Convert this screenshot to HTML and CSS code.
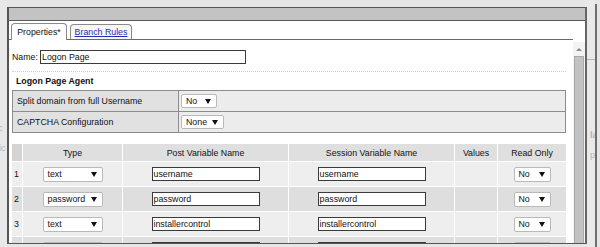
FILE: index.html
```html
<!DOCTYPE html>
<html>
<head>
<meta charset="utf-8">
<link rel="stylesheet" href="styles.css">
</head>
<body>
<div class="desk">
  <div class="lstrip">
    <span class="ghost g1">c</span>
    <span class="ghost g2">ic</span>
  </div>
  <div class="dialog">
    <div class="titlebar"></div>
    <div class="content">
      <div class="main">
        <div class="tabs">
          <div class="tab active">Properties*</div>
          <div class="tab link"><a>Branch Rules</a></div>
        </div>
        <div class="panel">
          <div class="namerow">
            <span class="lbl">Name:</span>
            <span class="input name">Logon Page</span>
          </div>
          <div class="sep"></div>
          <div class="section">Logon Page Agent</div>
          <div class="props">
            <div class="prow">
              <div class="pl">Split domain from full Username</div>
              <div class="pv"><span class="sel s-no">No</span></div>
            </div>
            <div class="prow">
              <div class="pl">CAPTCHA Configuration</div>
              <div class="pv"><span class="sel s-none">None</span></div>
            </div>
          </div>
          <div class="vars">
            <div class="vrow head">
              <div class="c idx"></div>
              <div class="c">Type</div>
              <div class="c">Post Variable Name</div>
              <div class="c">Session Variable Name</div>
              <div class="c">Values</div>
              <div class="c">Read Only</div>
            </div>
            <div class="vrow odd">
              <div class="c idx">1</div>
              <div class="c"><span class="sel s-type">text</span></div>
              <div class="c"><span class="input v">username</span></div>
              <div class="c"><span class="input v">username</span></div>
              <div class="c"></div>
              <div class="c"><span class="sel s-ro">No</span></div>
            </div>
            <div class="vrow even">
              <div class="c idx">2</div>
              <div class="c"><span class="sel s-type">password</span></div>
              <div class="c"><span class="input v">password</span></div>
              <div class="c"><span class="input v">password</span></div>
              <div class="c"></div>
              <div class="c"><span class="sel s-ro">No</span></div>
            </div>
            <div class="vrow odd">
              <div class="c idx">3</div>
              <div class="c"><span class="sel s-type">text</span></div>
              <div class="c"><span class="input v">installercontrol</span></div>
              <div class="c"><span class="input v">installercontrol</span></div>
              <div class="c"></div>
              <div class="c"><span class="sel s-ro">No</span></div>
            </div>
            <div class="vrow even">
              <div class="c idx"></div>
              <div class="c"><span class="sel s-type empty"></span></div>
              <div class="c"><span class="input v"></span></div>
              <div class="c"><span class="input v"></span></div>
              <div class="c"></div>
              <div class="c"><span class="sel s-ro empty"></span></div>
            </div>
          </div>
        </div>
      </div>
      <div class="scroll">
        <div class="arrow"></div>
        <div class="thumb"></div>
      </div>
    </div>
  </div>
  <div class="rstrip">
    <div class="rgap">
      <div class="hline"></div>
      <span class="ghost g3">la</span>
      <span class="ghost g4">p/</span>
    </div>
    <div class="rline"></div>
    <div class="rrest"></div>
  </div>
</div>
</body>
</html>
```
FILE: styles.css
```css
html, body {
  margin: 0;
  padding: 0;
}
body {
  width: 600px;
  height: 247px;
  overflow: hidden;
  background: #e6e6e6;
  font-family: "Liberation Sans", Arial, sans-serif;
  font-size: 8.8px;
  color: #111;
}
.desk {
  display: flex;
  height: 247px;
}
.lstrip {
  width: 7px;
  display: flex;
  flex-direction: column;
  overflow: hidden;
  background: #e8e8e8;
}
.ghost {
  color: #b4b4b4;
  font-size: 9px;
  line-height: 10px;
  white-space: nowrap;
}
.g1 { margin-top: 123px; margin-left: -2px; }
.g2 { margin-top: 10px; margin-left: -1px; }
.dialog {
  margin-top: 7px;
  width: 580px;
  height: 237px;
  box-sizing: border-box;
  border: 1px solid #555;
  border-left-width: 2px;
  border-right-width: 2px;
  border-right-color: #666;
  background: #fff;
  display: flex;
  flex-direction: column;
  overflow: hidden;
}
.titlebar {
  height: 13px;
  flex: none;
  box-sizing: border-box;
  background: #c3c3c3;
  border-bottom: 1px solid #5a5a5a;
}
.content {
  flex: 1;
  min-height: 0;
  display: flex;
}
.main {
  flex: 1;
  min-width: 0;
  padding-top: 2px;
  display: flex;
  flex-direction: column;
}
.tabs {
  display: flex;
  align-items: flex-end;
  gap: 3px;
  padding-left: 2px;
  height: 16px;
  border-bottom: 1px solid #6a6a6a;
  flex: none;
}
.tab {
  box-sizing: border-box;
  border: 1px solid #8a8a8a;
  border-bottom: none;
  border-radius: 4px 4px 0 0;
  display: flex;
  align-items: center;
  justify-content: center;
  white-space: nowrap;
}
.tab.active {
  width: 56px;
  height: 17px;
  margin-bottom: -1px;
  background: #fff;
  padding-bottom: 1px;
}
.tab.link {
  width: 62px;
  height: 15px;
  background: #f6f6f6;
}
.tab.link a {
  color: #2b2bb8;
  text-decoration: underline;
}
.panel {
  padding: 0 7px 0 3px;
  display: flex;
  flex-direction: column;
}
.namerow {
  margin-top: 10px;
  display: flex;
  align-items: center;
  height: 14px;
}
.lbl {
  width: 28px;
}
.input {
  box-sizing: border-box;
  height: 14px;
  border: 1px solid #3a3a3a;
  background: #fff;
  display: flex;
  align-items: center;
  padding-left: 1px;
  white-space: nowrap;
  overflow: hidden;
}
.input.name {
  width: 206px;
}
.sep {
  margin-top: 7px;
  border-top: 1px dotted #cfcfcf;
}
.section {
  height: 18px;
  display: flex;
  align-items: center;
  padding-left: 4px;
  font-weight: bold;
  font-size: 8.8px;
}
.props {
  border: 1px solid #8c8c8c;
  border-bottom: none;
}
.prow {
  display: flex;
  height: 21px;
  box-sizing: border-box;
  border-bottom: 1px solid #8c8c8c;
}
.pl {
  width: 166px;
  box-sizing: border-box;
  border-right: 1px solid #8c8c8c;
  background: #e1e1e1;
  padding-left: 4px;
  display: flex;
  align-items: center;
}
.pv {
  flex: 1;
  background: #ececec;
  padding-left: 2px;
  display: flex;
  align-items: center;
}
.sel {
  box-sizing: border-box;
  height: 15px;
  border: 1px solid #b9b9b9;
  border-radius: 2px;
  background: #fff;
  display: flex;
  align-items: center;
  padding-left: 4px;
  position: relative;
  white-space: nowrap;
}
.sel::after {
  content: "";
  position: absolute;
  right: 5px;
  top: 4px;
  border-left: 3px solid transparent;
  border-right: 3px solid transparent;
  border-top: 5px solid #111;
}
.s-no { width: 36px; height: 14px; }
.s-none { width: 43px; height: 14px; }
.s-type { width: 60px; }
.s-ro { width: 37px; }
.vars {
  margin-top: 11px;
  display: flex;
  flex-direction: column;
}
.vrow {
  display: grid;
  grid-template-columns: 11px 100px 166px 166px 43px 68px;
  height: 25px;
  box-sizing: border-box;
  border-bottom: 1px solid #fff;
}
.vrow.head {
  height: 18px;
  background: #dfdfdf;
}
.vrow.odd { background: #eeeeee; }
.vrow.even { background: #dedede; }
.c {
  border-right: 1px solid #fff;
  display: flex;
  align-items: center;
  justify-content: center;
  white-space: nowrap;
}
.c:last-child { border-right: none; }
.c.idx {
  justify-content: flex-start;
  padding-left: 2px;
}
.head .c.idx { background: #d4d4d4; }
.input.v {
  width: 108px;
}
.scroll {
  width: 12px;
  margin-top: 21px;
  background: #f3f3f3;
  display: flex;
  flex-direction: column;
  align-items: center;
}
.arrow {
  margin-top: 6px;
  border-left: 3px solid transparent;
  border-right: 3px solid transparent;
  border-bottom: 3px solid #8a8a8a;
}
.thumb {
  margin-top: 5px;
  width: 10px;
  flex: 1;
  box-sizing: border-box;
  background: #c2c2c2;
  border: 1px solid #aaa;
  border-bottom: none;
}
.rstrip {
  flex: 1;
  display: flex;
}
.rgap {
  width: 8px;
  display: flex;
  flex-direction: column;
  overflow: hidden;
  background: #e9e9e9;
}
.hline {
  margin-top: 59px;
  height: 1px;
  background: #b4b4b4;
}
.g3 { margin-top: 70px; margin-left: 3px; font-weight: bold; }
.g4 { margin-top: 10px; margin-left: 3px; }
.rline {
  width: 2px;
  margin-top: 4px;
  background: #6e6e6e;
}
.rrest {
  flex: 1;
  background: #e6e6e6;
}
```
